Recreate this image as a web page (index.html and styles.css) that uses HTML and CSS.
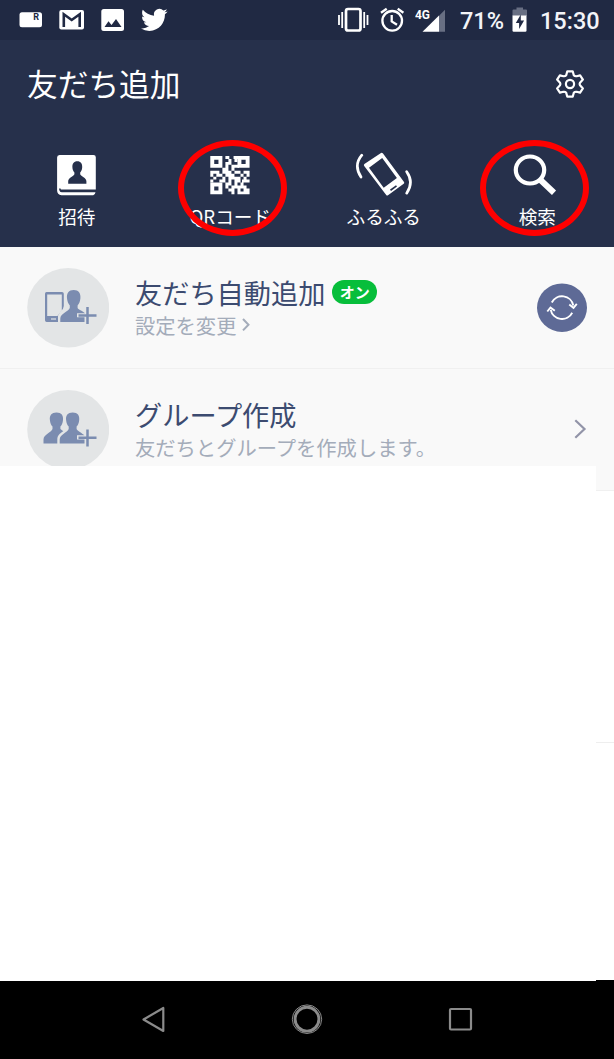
FILE: index.html
```html
<!DOCTYPE html>
<html lang="ja">
<head>
<meta charset="utf-8">
<title>友だち追加</title>
<link rel="stylesheet" href="styles.css">
</head>
<body>
<div class="screen">
  <header class="top">
    <div class="status">
      <div class="notifications">
        <svg width="24" height="40" viewBox="19 0 24 40"><rect x="19.5" y="12.3" width="22.5" height="15" rx="2.5" fill="#fff"/><text class="badge-letter" x="33.2" y="20.2">R</text></svg>
        <svg width="26" height="40" viewBox="59 0 26 40"><rect x="59.3" y="10" width="24.7" height="19.5" rx="2" fill="#fff"/><path d="M63.8 27V14.2L71.7 20l8-5.8V27" fill="none" stroke="#202943" stroke-width="2.6"/></svg>
        <svg width="24" height="40" viewBox="101 0 24 40"><rect x="101.3" y="9" width="22.7" height="22" rx="2.5" fill="#fff"/><path d="M104.500 27l4-5.700 3 3.800 4.500-6 5.500 7.900z" fill="#202943"/></svg>
        <svg width="28" height="40" viewBox="140.500 0 28 40"><path transform="translate(140.500 6.300) scale(1.110 1.130)" fill="#fff" d="M23.950 4.570a10 10 0 01-2.820.77 4.960 4.960 0 002.160-2.720c-.95.55-2 .95-3.130 1.180a4.920 4.920 0 00-8.380 4.480C7.690 8.100 4.070 6.130 1.640 3.160a4.820 4.820 0 00-.66 2.480c0 1.710.87 3.210 2.190 4.100a4.900 4.900 0 01-2.230-.62v.06a4.920 4.920 0 003.950 4.830 5 5 0 01-2.210.08 4.940 4.940 0 004.600 3.420A9.870 9.870 0 010 19.540a13.990 13.990 0 007.560 2.210c9.050 0 13.990-7.500 13.990-13.980 0-.21 0-.42-.02-.63a9.940 9.940 0 002.460-2.550z"/></svg>
      </div>
      <div class="indicators">
        <svg class="vibrate" width="32" height="40" viewBox="338 0 32 40" fill="none" stroke="#fff"><rect x="346" y="9" width="14.5" height="21.5" rx="2" stroke-width="2.7"/><path d="M342.2 12v16M364.2 12v16" stroke-width="1.8"/><path d="M339 15v10M367.5 15v10" stroke-width="1.8"/></svg>
        <svg class="alarm" width="26" height="40" viewBox="380 0 26 40" fill="none" stroke="#fff" stroke-width="2.3"><circle cx="392.2" cy="20.8" r="9.8"/><path d="M391.7 15v6.400l5.300 3.400M381 12.800l5.700-4.100M403.400 12.800l-5.700-4.100"/></svg>
        <svg class="signal" width="31" height="40" viewBox="415 0 31 40"><path d="M439 15.800l6-6v22h-6z" fill="#686f83"/><path d="M422.500 31.800L439 15.500v16.300z" fill="#fff"/><text class="network" x="415" y="18.600" textLength="15" lengthAdjust="spacingAndGlyphs">4G</text></svg>
        <span class="percent">71%</span>
        <svg class="battery" width="16" height="40" viewBox="512 0 16 40"><path d="M512.500 16V10.500q0-1 1-1h3V7.500h6.500v2h3q1 0 1 1V16z" fill="#686f83"/><path d="M512.500 15.500h14v15q0 1.200-1.200 1.200h-11.600q-1.200 0-1.200-1.200z" fill="#fff"/><path d="M520.800 14.500l-5 8.600h3.300v6l5-8.500h-3.300z" fill="#202943"/></svg>
        <span class="clock">15:30</span>
      </div>
    </div>
    <div class="titlebar">
      <h1>友だち追加</h1>
      <svg width="30" height="30" viewBox="-15 -15 30 30" fill="none" stroke="#fff"><path stroke-width="2.200" stroke-linejoin="round" d="M-2.700-12.700H2.700L3.800-8.800Q4.900-7.500 6.600-7.800L10.100-8.600 12.900-4.400 10-1.300Q9.200 0 10 1.300L12.900 4.400 10.100 8.600 6.600 7.800Q4.900 7.500 3.800 8.800L2.700 12.700H-2.700L-3.800 8.800Q-4.900 7.500-6.600 7.800L-10.100 8.600-12.900 4.400-10 1.300Q-9.200 0-10-1.300L-12.900-4.400-10.100-8.600-6.600-7.800Q-4.900-7.500-3.800-8.800Z"/><circle r="4.100" stroke-width="2.200"/></svg>
    </div>
    <nav class="actions">
      <div class="action">
        <svg width="60" height="50" viewBox="47 150 60 50"><path fill="#fff" d="M59.500 155H93.500a2.300 2.300 0 012.300 2.300V189.500H60.200q-.8 2.700 1.600 2.800H95.500q-.5 2.900-2.300 2.900H61.500q-4.400-.4-4.400-4.600V157.500q0-2.500 2.400-2.500z"/><path fill="none" stroke="#26304b" stroke-width="1.500" d="M59.800 188.500q0 2.800 2.500 2.800H96"/><path fill="#26304b" d="M77.300 161.300c3.500 0 5.100 2.600 4.900 5.900-.1 2.500-.9 3.900-2 5.200v1.800c.8 2.400 6.200 3.300 6.200 7v2.500H68.200v-2.500c0-3.700 5.400-4.600 6.200-7v-1.800c-1.100-1.300-1.900-2.700-2-5.200-.2-3.300 1.400-5.900 4.900-5.900z"/></svg>
        <span>招待</span>
      </div>
      <div class="action marked">
        <svg width="60" height="50" viewBox="200 150 60 50"><g transform="translate(210.300 156) scale(3.020 2.950)" fill="none" stroke="#fff"><path d="M.65.65h2.700v2.700H.65zM9.650.65h2.700v2.700h-2.700zM.65 9.650h2.700v2.700H.65z" stroke-width="1.300"/><path d="M5 .5h1.300M7.700 .5H10M6 1.500h1M8 1.500h1M5 2.500h2M5 3.500h1M7 3.500h2.500M4 4.500h2M7 4.500h1M0 5.500h3M4 5.500h3M8 5.500h2M11 5.500h2M0 6.500h1M2 6.500h2M5 6.500h3M10 6.500h1M12 6.500h1M1 7.500h1M4 7.500h1M6 7.500h4M11 7.500h1M0 8.500h1M3 8.500h2M6 8.500h1M8 8.500h2M10.500 8.500h2.500M5 9.500h2M8 9.500h1M10 9.500h1M5 10.500h1M7 10.500h2M9 10.500h3M6 11.500h2M9 11.500h1M11 11.500h2M7 12.500h1M9 12.500h4"/></g></svg>
        <span>QRコード</span>
      </div>
      <div class="action">
        <svg width="60" height="50" viewBox="354 150 60 50"><path fill="#fff" fill-rule="evenodd" d="M381 153q1-.6 2 .5L404 182q.7 1-.3 1.800L388 195.200q-1 .6-1.800-.3L364.200 166q-.8-1 .2-1.900zM369 167.700L383.700 187.800 396.900 178 382.200 158z"/><path stroke="#26304b" stroke-width="1.700" d="M390.500 190.200l6-4.300"/><path fill="none" stroke="#fff" stroke-width="2.700" stroke-linecap="round" d="M361.800 155.200q-8.500 10-.8 21.800M406.700 171.700q7.500 10.500 0 21.500"/></svg>
        <span>ふるふる</span>
      </div>
      <div class="action marked marked-search">
        <svg width="60" height="50" viewBox="507 150 60 50"><path d="M540 179.500l14 13.200" stroke="#fff" stroke-width="6"/><ellipse cx="530" cy="170" rx="14.200" ry="13.500" fill="#26304b" stroke="#fff" stroke-width="4.200"/></svg>
        <span>検索</span>
      </div>
    </nav>
  </header>

  <main class="list">
    <section class="row">
      <svg width="82" height="80" viewBox="27 268 82 80"><ellipse cx="68.200" cy="307.700" rx="41" ry="39.700" fill="#e3e5e6"/><path fill="#7b8cb0" fill-rule="evenodd" d="M46.500 292H62q1.800 0 1.800 1.800V306q0 2.500-3 5.200L58 315.800V322H46.700q-1.700 0-1.700-1.700V293.700q0-1.700 1.500-1.700zM47.200 294.500V316H57.500L61.800 310V294.500z"/><path stroke="#e3e5e6" stroke-width="1.200" d="M51 319h5"/><path fill="#7b8cb0" d="M73.700 290c5 0 7.200 3.500 6.700 8.200-.3 3.500-1.300 5.500-2.800 7.200v2.500c.8 1.700 6 3.300 7.600 5.400H77v4h7.500v4.700H60.300v-3.500c0-5.200 8.200-7 9.500-10.600v-2.500c-1.500-1.700-2.500-3.700-2.800-7.200-.5-4.700 1.700-8.200 6.700-8.200z"/><path stroke="#7b8cb0" stroke-width="2.500" d="M78.500 315.500H96.500M87.500 307v17"/></svg>
      <div class="copy">
        <h2>友だち自動追加<em>オン</em></h2>
        <p>設定を変更<svg width="12" height="16" viewBox="0 0 12 16"><path d="M3 2l5.500 5.700L3 13.400" fill="none" stroke="#a4acba" stroke-width="2"/></svg></p>
      </div>
      <svg class="sync" width="50" height="50" viewBox="537 283 50 50"><ellipse cx="562" cy="307.700" rx="25" ry="24.200" fill="#5e6a96"/><path fill="none" stroke="#fff" stroke-width="1.900" d="M551.800 302.500a11.500 11.500 0 0121.500 3M569.300 304.500l4.200 3.400 3.300-4M572.200 312.800a11.500 11.500 0 01-21.500-3M547.300 311.500l3.200-4 4.300 3.300"/></svg>
    </section>
    <section class="row">
      <svg width="82" height="80" viewBox="27 389.500 82 80"><ellipse cx="68.200" cy="429.200" rx="41" ry="39.700" fill="#e3e5e6"/><g fill="#7b8cb0"><path d="M56.500 412c5 0 7 3 6.500 7.500-.3 3.500-1.300 5-2.600 6.600v2.300l2.900 2.300c-3.600 2.400-6 4-6 8.500v3.800H43.500V439c0-5 7.700-7 9-10.600v-2.300c-1.300-1.600-2.300-3.100-2.600-6.600-.5-4.500 1.600-7.500 6.600-7.500z"/><path d="M72.700 412c5 0 7 3 6.500 7.500-.3 3.500-1.300 5-2.600 6.600v2.300c.8 2 5.400 4 7.800 6.300H77v4.300h7.500v4H59.700v-4c0-5 7.700-7 9-10.600v-2.300c-1.300-1.600-2.300-3.100-2.600-6.600-.5-4.500 1.600-7.500 6.600-7.500z"/></g><path stroke="#7b8cb0" stroke-width="2.500" d="M78.500 437.200H96.500M87.500 429v17"/></svg>
      <div class="copy">
        <h2>グループ作成</h2>
        <p>友だちとグループを作成します。</p>
      </div>
      <svg class="chevron" width="14" height="24" viewBox="0 0 14 24"><path d="M2.300 2.300l9.200 8.700-9.200 8.700" fill="none" stroke="#9294a8" stroke-width="2.200"/></svg>
    </section>
    <div class="blank first"></div>
    <div class="blank"></div>
    <div class="cover"></div>
  </main>

  <footer class="navbar">
    <svg width="30" height="36" viewBox="139 1002 30 36"><path d="M163.300 1008v23L143.500 1019.500z" fill="none" stroke="#8b8b8b" stroke-width="2.200" stroke-linejoin="round"/></svg>
    <svg width="36" height="36" viewBox="289 1002 36 36" fill="none" stroke="#8b8b8b"><ellipse cx="307" cy="1019.200" rx="14.700" ry="14.300" stroke-width="1"/><circle cx="307" cy="1019.200" r="11.900" stroke-width="2.900"/></svg>
    <svg width="30" height="36" viewBox="446 1002 30 36"><rect x="450" y="1009" width="21" height="20.500" rx="1" fill="none" stroke="#8b8b8b" stroke-width="2.200"/></svg>
  </footer>
</div>
</body>
</html>
```
FILE: styles.css
```css
*, *::after { box-sizing: border-box; }
body { margin: 0; background: #fff; font-family: "Noto Sans CJK JP", sans-serif; }
svg { display: block; flex: none; }
h1, h2, p { margin: 0; font-weight: 400; }

.screen { width: 614px; height: 1059px; display: flex; flex-direction: column; overflow: hidden; }

.top { height: 247px; background: #26304b; color: #fff; }
.status { height: 40px; padding: 0 14px 0 19px; background: #202943; display: flex; justify-content: space-between; }
.notifications { display: flex; gap: 16px; }
.indicators { display: flex; font: 500 23.5px/42px Roboto, sans-serif; color: #f3f4f8; }
.alarm { margin-left: 10px; }
.signal { margin-left: 9px; }
.percent { width: 52px; margin-left: 14px; }
.clock { width: 60px; margin-left: 12px; white-space: nowrap; }
.network { font: 700 13.5px Roboto, sans-serif; fill: #fff; }
.badge-letter { font: 700 9px Roboto, sans-serif; fill: #202943; }

.titlebar { height: 90px; padding: 0 29px 2px 27px; display: flex; align-items: center; justify-content: space-between; }
.titlebar h1 { padding-bottom: 2px; font-size: 30.7px; line-height: 44px; }

.actions { padding-top: 20px; display: grid; grid-template-columns: repeat(4, 1fr); }
.action { position: relative; display: flex; flex-direction: column; align-items: center; }
.action span { margin-top: 2px; font-size: 18.6px; line-height: 28px; white-space: nowrap; }
.marked::after { content: ""; position: absolute; left: 24.5px; top: -10px; width: 109px; height: 96px; border: 6px solid #fe0000; border-radius: 50%; }
.marked-search::after { left: 19.5px; }

.list { position: relative; height: 733px; }
.row { height: 122px; padding: 0 27px; background: #f9f9f9; border-bottom: 1px solid #f0f0f0; display: flex; align-items: center; }
.copy { flex: 1; margin-left: 26px; padding-bottom: 5px; }
.copy h2 { display: flex; align-items: center; color: #3c4b70; font-size: 27.2px; line-height: 39px; }
.copy h2 em { width: 45px; height: 24px; margin-left: 7px; border-radius: 12px; background: #07be3b; color: #fff; font-size: 15px; font-style: normal; font-weight: 700; line-height: 23px; text-align: center; }
.copy p { display: flex; align-items: center; color: #a4acba; font-size: 20.3px; line-height: 26px; }
.copy p svg { margin-left: 4px; }
.blank { height: 237px; background: #fff; }
.blank.first { height: 252px; border-bottom: 1px solid #eee; }
.cover { position: absolute; left: 0; top: 219px; width: 596px; height: 515px; background: #fff; }

.navbar { height: 79px; padding: 0 138.5px; background: #000; display: flex; align-items: center; justify-content: space-between; }
```
